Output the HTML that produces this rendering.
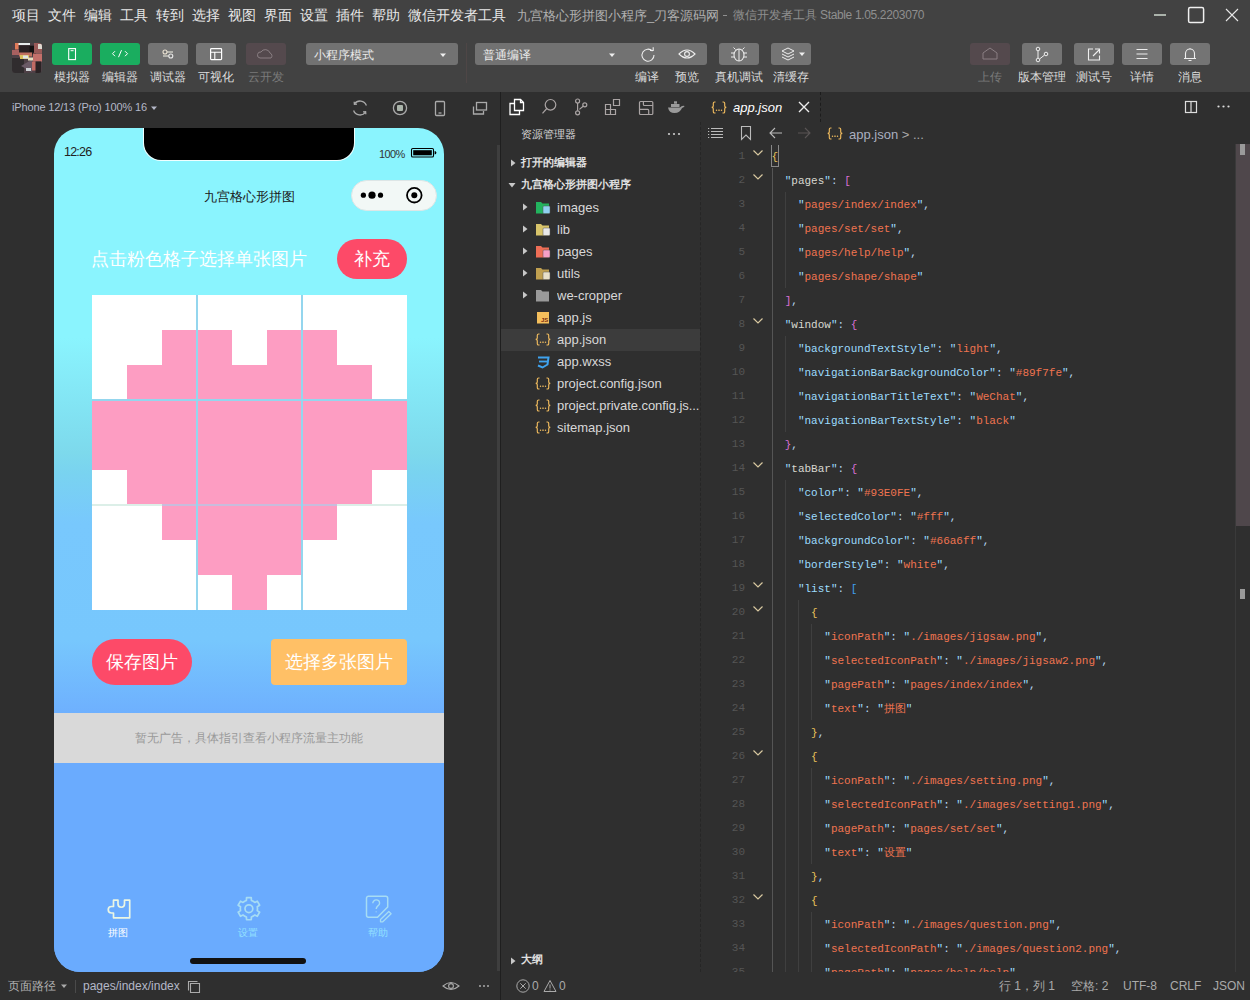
<!DOCTYPE html>
<html><head><meta charset="utf-8">
<style>
*{box-sizing:border-box;margin:0;padding:0}
html,body{width:1250px;height:1000px;overflow:hidden;background:#2f2f2f;font-family:"Liberation Sans",sans-serif;}
.a{position:absolute}
#top{left:0;top:0;width:1250px;height:92px;background:#424242}
.menu{top:6px;font-size:14px;color:#e8e8e8;line-height:18px;white-space:nowrap}
.tb{top:43px;width:40px;height:22px;border-radius:3px;background:#747474}
.tl{top:70px;font-size:12px;color:#dcdcdc;line-height:15px;white-space:nowrap;text-align:center}
#sim{left:0;top:92px;width:500px;height:880px;background:#2f2f2f}
#exp{left:501px;top:92px;width:199px;height:880px;background:#2f2f2f}
#ed{left:700px;top:92px;width:550px;height:880px;background:#2f2f2f}
#status{left:0;top:972px;width:1250px;height:28px;background:#2f2f2f}
.code{font-family:"Liberation Mono",monospace;font-size:11px;white-space:pre;line-height:24px}
</style></head><body><svg width="0" height="0" style="position:absolute"><defs><symbol id="jsn" viewBox="0 0 16 13"><g fill="none" stroke="#f0bb5e" stroke-width="1.15"><path d="M4.5 1H3.6Q2.3 1 2.3 2.3V5Q2.3 6.4 0.7 6.4Q2.3 6.4 2.3 7.8V10.7Q2.3 12 3.6 12H4.5"/><path d="M11.5 1H12.4Q13.7 1 13.7 2.3V5Q13.7 6.4 15.3 6.4Q13.7 6.4 13.7 7.8V10.7Q13.7 12 12.4 12H11.5"/></g><g fill="#f0bb5e"><circle cx="5.5" cy="9.2" r="0.75"/><rect x="7.2" y="8.6" width="1.6" height="1.2"/><circle cx="10.5" cy="9.2" r="0.75"/></g></symbol></defs></svg>
<div id="top" class="a">
<div class="a menu" style="left:12px">项目</div>
<div class="a menu" style="left:48px">文件</div>
<div class="a menu" style="left:84px">编辑</div>
<div class="a menu" style="left:120px">工具</div>
<div class="a menu" style="left:156px">转到</div>
<div class="a menu" style="left:192px">选择</div>
<div class="a menu" style="left:228px">视图</div>
<div class="a menu" style="left:264px">界面</div>
<div class="a menu" style="left:300px">设置</div>
<div class="a menu" style="left:336px">插件</div>
<div class="a menu" style="left:372px">帮助</div>
<div class="a menu" style="left:408px">微信开发者工具</div>
<div class="a" style="left:517px;top:7px;font-size:13px;line-height:17px;color:#b0b0b0;white-space:nowrap">九宫格心形拼图小程序_刀客源码网</div>
<div class="a" style="left:723px;top:15px;width:4px;height:1px;background:#8f8f8f"></div>
<div class="a" style="left:733px;top:7px;font-size:12px;line-height:17px;color:#8f8f8f;white-space:nowrap">微信开发者工具</div>
<div class="a" style="left:820px;top:7px;font-size:12px;line-height:17px;color:#8f8f8f;white-space:nowrap;letter-spacing:-0.35px">Stable 1.05.2203070</div>
<svg class="a" style="left:1150px;top:0" width="100" height="30"><path d="M4 15h12" stroke="#aab2aa" stroke-width="2"/><rect x="38.6" y="7.6" width="15" height="15" rx="1.6" stroke="#f0f0f0" stroke-width="1.5" fill="none"/><path d="M76 9l12 12M88 9l-12 12" stroke="#e8e8e8" stroke-width="1.1"/></svg>
<svg class="a" style="left:12px;top:42.5px" width="30" height="30"><defs><clipPath id="avc"><rect width="30" height="30" rx="3.5"/></clipPath></defs><g clip-path="url(#avc)">
<rect width="30" height="30" fill="#4e4046"/>
<rect x="0" y="15" width="12" height="15" fill="#302c2e"/>
<rect x="6" y="0" width="12" height="2" fill="#e8ecec"/>
<rect x="3" y="0" width="3.5" height="6.5" fill="#e07a58"/>
<rect x="0" y="7" width="8" height="5" fill="#a86060"/>
<rect x="7" y="2.5" width="17" height="9" fill="#2a2224"/>
<rect x="17.5" y="3" width="6.5" height="6" fill="#151212"/>
<rect x="22" y="0" width="8" height="10" fill="#9a5a58"/>
<rect x="26" y="1" width="4" height="5" fill="#e0d8d0"/>
<rect x="21" y="10.5" width="9" height="8" fill="#c4706a"/>
<rect x="20" y="18.5" width="4" height="9" fill="#c06a64"/>
<rect x="23.5" y="18.5" width="5.5" height="11.5" fill="#2a2224"/>
<path d="M20 16.5L9 23L20 29Z" fill="#6a5a66"/>
<rect x="7" y="9.5" width="13" height="4" fill="#c07060"/>
<rect x="8" y="12" width="9" height="4" fill="#d8c060"/>
<rect x="11" y="12.5" width="5" height="3" fill="#dfe4e8"/>
<rect x="16" y="14.5" width="5" height="3" fill="#e8e0c0"/>
<rect x="14" y="25" width="5" height="3" fill="#d0d4d8"/>
</g></svg>
<div class="a tb" style="left:52px;background:#1aad5f"></div>
<svg class="a" style="left:52px;top:43px" width="40" height="22"><rect x="16.7" y="5.6" width="6.8" height="11" stroke="#fff" fill="none" stroke-width="1.1"/><path d="M18.6 7.7h3" stroke="#fff" stroke-width="1"/></svg>
<div class="a tb" style="left:100px;background:#1aad5f"></div>
<svg class="a" style="left:100px;top:43px" width="40" height="22"><path d="M15 8.2l-2.5 2.5 2.5 2.5M25 8.2l2.5 2.5-2.5 2.5M21.5 7.2l-3 7" stroke="#fff" fill="none" stroke-width="1"/></svg>
<div class="a tb" style="left:148px"></div>
<svg class="a" style="left:148px;top:43px" width="40" height="22"><path d="M19 9h6M15 13h6" stroke="#c8c8c0" stroke-width="1.6"/><circle cx="17" cy="9" r="2" fill="#747474" stroke="#e8e0d0" stroke-width="1.1"/><circle cx="22.8" cy="13" r="2" fill="#747474" stroke="#e8e8e8" stroke-width="1.1"/></svg>
<div class="a tb" style="left:196px"></div>
<svg class="a" style="left:196px;top:43px" width="40" height="22"><rect x="14.6" y="5.6" width="11" height="11" rx="0.8" stroke="#fff" fill="none" stroke-width="1.2"/><path d="M14.6 9.2h11M18.8 9.2v7.4" stroke="#fff" stroke-width="1.1"/></svg>
<div class="a tb" style="left:246px;background:#54494d"></div>
<svg class="a" style="left:246px;top:43px" width="40" height="22"><path d="M14 15a3 3 0 0 1 1-6a5 5 0 0 1 9 1a3 3 0 0 1 1 5z" stroke="#8a7f83" fill="none" stroke-width="1"/></svg>
<div class="a" style="left:306px;top:43px;width:152px;height:22px;border-radius:3px;background:#727272"></div>
<div class="a" style="left:314px;top:47px;font-size:12px;line-height:17px;color:#eaeaea">小程序模式</div>
<svg class="a" style="left:437.5px;top:50.5px" width="10" height="8"><path d="M2 2.5h6l-3 3.5z" fill="#eee"/></svg>
<div class="a" style="left:466px;top:43px;width:1px;height:40px;background:#4e4646"></div>
<div class="a" style="left:475px;top:43px;width:232px;height:22px;border-radius:3px;background:#727272"></div>
<div class="a" style="left:483px;top:47px;font-size:12px;line-height:17px;color:#eaeaea">普通编译</div>
<svg class="a" style="left:606.5px;top:50.5px" width="10" height="8"><path d="M2 2.5h6l-3 3.5z" fill="#eee"/></svg>
<svg class="a" style="left:627px;top:43px" width="80" height="22"><path d="M25.5 8.2A6 6 0 1 0 27 12" stroke="#eee" fill="none" stroke-width="1.1"/><path d="M23 7.5h3.2v-3.2" stroke="#eee" fill="none" stroke-width="1.1"/><path d="M52 11q8-8 16 0q-8 8-16 0z" stroke="#eee" fill="none" stroke-width="1.1"/><circle cx="60" cy="11" r="2.4" stroke="#eee" fill="none" stroke-width="1.1"/></svg>
<div class="a tb" style="left:719px"></div>
<svg class="a" style="left:719px;top:43px" width="40" height="22"><ellipse cx="20" cy="12" rx="5" ry="6" stroke="#eee" fill="none" stroke-width="1.1"/><path d="M20 6v12M15 10h-3M15 14h-3M25 10h3M25 14h3M16.5 6.5l-2-2M23.5 6.5l2-2" stroke="#eee" stroke-width="1"/></svg>
<div class="a tb" style="left:771px"></div>
<svg class="a" style="left:771px;top:43px" width="40" height="22"><path d="M11 8l6-3 6 3-6 3z" stroke="#eee" fill="none" stroke-width="1"/><path d="M11 11l6 3 6-3M11 14l6 3 6-3" stroke="#eee" fill="none" stroke-width="1"/><path d="M28 9.5h6l-3 3.5z" fill="#eee"/></svg>
<div class="a tb" style="left:970px;background:#54494d"></div>
<svg class="a" style="left:970px;top:43px" width="40" height="22"><path d="M13 16h14v-6l-7-5-7 5z" stroke="#8a7f83" fill="none" stroke-width="1"/></svg>
<div class="a tb" style="left:1022px"></div>
<svg class="a" style="left:1022px;top:43px" width="40" height="22"><circle cx="16" cy="6" r="1.8" stroke="#eee" fill="none"/><circle cx="16" cy="17" r="1.8" stroke="#eee" fill="none"/><circle cx="24" cy="11" r="1.8" stroke="#eee" fill="none"/><path d="M16 8v7M22.4 12.2l-4.6 3.6" stroke="#eee" stroke-width="1"/></svg>
<div class="a tb" style="left:1074px"></div>
<svg class="a" style="left:1074px;top:43px" width="40" height="22"><path d="M19 6h-4.5v11h11v-4.5" stroke="#eee" fill="none" stroke-width="1.1"/><path d="M19 13l6-6M21 6h4.5v4.5" stroke="#eee" fill="none" stroke-width="1.1"/></svg>
<div class="a tb" style="left:1122px"></div>
<svg class="a" style="left:1122px;top:43px" width="40" height="22"><path d="M14.5 6.5h11M14.5 11h11M14.5 15.5h11" stroke="#eee" stroke-width="1.1"/></svg>
<div class="a tb" style="left:1170px"></div>
<svg class="a" style="left:1170px;top:43px" width="40" height="22"><path d="M15.5 15.5v-5a4.5 4.5 0 0 1 9 0v5zM14 15.5h12M20 5v1.5M18.5 17.5h3" stroke="#eee" fill="none" stroke-width="1.1"/></svg>
<div class="a tl" style="left:42px;width:60px">模拟器</div>
<div class="a tl" style="left:90px;width:60px">编辑器</div>
<div class="a tl" style="left:138px;width:60px">调试器</div>
<div class="a tl" style="left:186px;width:60px">可视化</div>
<div class="a tl" style="left:236px;width:60px;color:#7a7a7a">云开发</div>
<div class="a tl" style="left:617px;width:60px">编译</div>
<div class="a tl" style="left:657px;width:60px">预览</div>
<div class="a tl" style="left:709px;width:60px">真机调试</div>
<div class="a tl" style="left:761px;width:60px">清缓存</div>
<div class="a tl" style="left:960px;width:60px;color:#7a7a7a">上传</div>
<div class="a tl" style="left:1012px;width:60px">版本管理</div>
<div class="a tl" style="left:1064px;width:60px">测试号</div>
<div class="a tl" style="left:1112px;width:60px">详情</div>
<div class="a tl" style="left:1160px;width:60px">消息</div>
</div>
<div id="sim" class="a">
<div class="a" style="left:12px;top:8px;font-size:11px;line-height:15px;color:#b4b8c8;white-space:nowrap;letter-spacing:-0.15px">iPhone 12/13 (Pro) 100% 16 <svg width="8" height="6"><path d="M1 1.5h6l-3 3.5z" fill="#b4b8c8"/></svg></div>
<svg class="a" style="left:345px;top:0" width="155" height="30"><g stroke="#aaa" fill="none" stroke-width="1.3"><path d="M21.4 13.5A6.7 6.7 0 0 0 9.5 12"/><path d="M8.6 18.5A6.7 6.7 0 0 0 20.5 20"/><path d="M9.2 9.8l0.2 2.6 2.6-0.2M20.8 22.2l-0.2-2.6-2.6 0.2"/>
<circle cx="55" cy="16" r="6.6"/><rect x="90.5" y="9.5" width="9" height="14" rx="1"/><path d="M93.5 21h3"/><rect x="131.5" y="10.5" width="10" height="7.5"/><path d="M128.5 14.5v7.5h10v-3"/></g><rect x="52" y="13" width="6" height="6" rx="1" fill="#aab4aa"/></svg>
<div class="a" style="left:54px;top:36px;width:390px;height:844px;border-radius:26px;overflow:hidden;background:linear-gradient(#8af4fe 0px,#8af4fe 210px,#7dd9ec 325px,#79d3f0 345px,#78c8fd 395px,#77c7fd 512px,#6eb0fe 585px)">
  <div class="a" style="left:90px;top:0;width:210px;height:32px;background:#000;border-radius:0 0 17px 17px;box-shadow:0 0 0 1px #f0ffff"></div>
  <div class="a" style="left:10px;top:17px;font-size:12.5px;line-height:15px;color:#222;letter-spacing:-0.8px">12:26</div>
  <div class="a" style="left:325px;top:20px;font-size:11px;line-height:13px;color:#333;letter-spacing:-0.6px">100%</div>
  <svg class="a" style="left:356px;top:19px" width="30" height="12"><rect x="1.5" y="1.5" width="22" height="8.5" rx="1.3" fill="none" stroke="#000" stroke-width="1.1"/><rect x="3.2" y="3.2" width="18.6" height="5.1" fill="#000"/><path d="M24.6 4a1.8 1.8 0 0 1 0 3.6z" fill="#000"/></svg>
  <div class="a" style="left:0;top:60px;width:390px;text-align:center;font-size:13px;line-height:17px;color:#1a1a1a">九宫格心形拼图</div>
  <div class="a" style="left:297px;top:51.5px;width:86px;height:31px;border-radius:16px;background:#f2f8f6;border:1px solid #dde6e6"></div>
  <svg class="a" style="left:297px;top:51px" width="86" height="32"><circle cx="12.4" cy="16.2" r="2.6" fill="#000"/><circle cx="21" cy="16.2" r="3.6" fill="#000"/><circle cx="29.5" cy="16.2" r="2.6" fill="#000"/><circle cx="63.3" cy="16.2" r="7.3" fill="none" stroke="#000" stroke-width="1.8"/><circle cx="63.3" cy="16.2" r="3" fill="#000"/></svg>
  <div class="a" style="left:37px;top:119px;font-size:18px;line-height:24px;color:#fff;white-space:nowrap">点击粉色格子选择单张图片</div>
  <div class="a" style="left:283px;top:111px;width:70px;height:40px;border-radius:20px;background:#fd4a68;color:#fff;font-size:18px;line-height:40px;text-align:center">补充</div>
  <div class="a" style="left:38px;top:167px;width:315px;height:315px;background:#fff">
  <div class="a" style="left:70px;top:35px;width:70px;height:35px;background:#fd9dc2"></div>
<div class="a" style="left:175px;top:35px;width:70px;height:35px;background:#fd9dc2"></div>
<div class="a" style="left:35px;top:70px;width:245px;height:35px;background:#fd9dc2"></div>
<div class="a" style="left:0px;top:105px;width:315px;height:35px;background:#fd9dc2"></div>
<div class="a" style="left:0px;top:140px;width:315px;height:35px;background:#fd9dc2"></div>
<div class="a" style="left:35px;top:175px;width:245px;height:35px;background:#fd9dc2"></div>
<div class="a" style="left:70px;top:210px;width:175px;height:35px;background:#fd9dc2"></div>
<div class="a" style="left:105px;top:245px;width:105px;height:35px;background:#fd9dc2"></div>
<div class="a" style="left:140px;top:280px;width:35px;height:35px;background:#fd9dc2"></div>
  <div class="a" style="left:0;top:209px;width:315px;height:2px;background:linear-gradient(90deg,#dcefe8 70px,#c8bcdc 70px,#c8bcdc 245px,#dcefe8 245px)"></div>
  <div class="a" style="left:104px;top:0;width:2px;height:315px;background:#94d6ee"></div>
  <div class="a" style="left:209px;top:0;width:2px;height:315px;background:#94d6ee"></div>
  <div class="a" style="left:0;top:104px;width:315px;height:2px;background:#94d6ee"></div>
  
  </div>
  <div class="a" style="left:38px;top:511px;width:100px;height:46px;border-radius:23px;background:#fd4a68;color:#fff;font-size:18px;line-height:46px;text-align:center">保存图片</div>
  <div class="a" style="left:217px;top:511px;width:136px;height:46px;border-radius:4px;background:#ffc066;color:#fff;font-size:18px;line-height:46px;text-align:center">选择多张图片</div>
  <div class="a" style="left:0;top:585px;width:390px;height:50px;background:#d9d9d9;color:#9a9a9a;font-size:12px;line-height:50px;text-align:center">暂无广告，具体指引查看小程序流量主功能</div>
  <div class="a" style="left:0;top:635px;width:390px;height:209px;background:#6aabfe"></div>
  <svg class="a" style="left:0;top:765px" width="390" height="40"><g fill="none" stroke-width="1.7" stroke-linejoin="round">
<path stroke="#eaf6e4" d="M59.5 7.2H64V11a3.25 3.25 0 0 0 6.5 0V7.2H75.7V24.8H59.5V20H57.5a3.25 3.25 0 0 1 0-6.5H59.5Z"/>
<g stroke="#a6dcf4"><path d="M190.60 8.25L192.39 7.48L192.55 4.65L197.25 4.65L197.41 7.48L199.20 8.25L200.77 9.41L203.30 8.14L205.65 12.21L203.28 13.77L203.50 15.70L203.28 17.63L205.65 19.19L203.30 23.26L200.77 21.99L199.20 23.15L197.41 23.92L197.25 26.75L192.55 26.75L192.39 23.92L190.60 23.15L189.03 21.99L186.50 23.26L184.15 19.19L186.52 17.63L186.30 15.70L186.52 13.77L184.15 12.21L186.50 8.14L189.03 9.41Z"/><circle cx="194.9" cy="15.700000000000045" r="3.9"/>
<path d="M333.7 14V5.3a2 2 0 0 0-2-2H314.5a2 2 0 0 0-2 2V22.2a2 2 0 0 0 2 2H323.5Z" stroke-width="1.5"/><path d="M318.8 10.3a3.4 3.4 0 0 1 6.8 0c0 2.2-3.4 3-3.4 5.6" stroke-width="1.4"/><path d="M322.2 18.4v0.9" stroke-width="1.4"/><path d="M326.5 26.5l8.3-8 2.3 2.3-8.3 8h-2.3z" stroke-width="1.3"/></g></g></svg>
<div class="a" style="left:54px;top:798.5px;width:20px;font-size:10px;line-height:12px;color:#fff;text-align:center;white-space:nowrap">拼图</div>
<div class="a" style="left:184px;top:798.5px;width:20px;font-size:10px;line-height:12px;color:#93e0fe;text-align:center;white-space:nowrap">设置</div>
<div class="a" style="left:314px;top:798.5px;width:20px;font-size:10px;line-height:12px;color:#93e0fe;text-align:center;white-space:nowrap">帮助</div>

  <div class="a" style="left:136px;top:830px;width:116px;height:6px;border-radius:3px;background:#111"></div>
</div>
</div>
<div id="exp" class="a">
<svg class="a" style="left:0;top:0" width="199" height="30"><g fill="none" stroke-width="1.3">
<g stroke="#fff"><path d="M13.5 18.5V7.5H19.5L22.5 10.5V18.5Z"/><path d="M19.5 7.5V10.5H22.5"/><path d="M13.5 11.5H9V22.5H18.5V18.5"/></g>
<g stroke="#aaa4a4" stroke-width="1.2"><circle cx="49.5" cy="12.8" r="5.3"/><path d="M45.8 16.5l-4.3 4.8"/>
<circle cx="76.6" cy="9" r="2"/><circle cx="76.6" cy="20.8" r="2"/><circle cx="83.8" cy="12.8" r="2"/><path d="M76.6 11v7.8M82.2 14.2l-3.8 3.2"/>
<path d="M104.5 12.5h5v5h-5zM104.5 17.5h5v5h-5zM109.5 17.5h5v5h-5zM112.5 7.5h6v6h-6z"/>
<rect x="138.5" y="9.5" width="13.3" height="13" rx="1"/><path d="M142.4 9.5V12.5a1 1 0 0 0 1 1H151.8M138.5 17.4H146.7a1 1 0 0 1 1 1V22.5"/></g></g>
<path d="M168 15.5H179q2-2.5 4.7-1.5q-1 1.5-2.7 2q-2 5-7.5 5q-5.5 0-6.5-5.5z" fill="#9a9a9a"/><rect x="170" y="12" width="8.5" height="3" fill="#9a9a9a"/><rect x="173" y="9.3" width="3" height="2.4" fill="#9a9a9a"/></svg>
<div class="a" style="left:20px;top:35px;font-size:11px;line-height:15px;color:#d4d4d4">资源管理器</div>
<svg class="a" style="left:165px;top:39px" width="16" height="6"><circle cx="3" cy="3" r="1.1" fill="#ccc"/><circle cx="8" cy="3" r="1.1" fill="#ccc"/><circle cx="13" cy="3" r="1.1" fill="#ccc"/></svg>
<svg class="a" style="left:8px;top:66px" width="8" height="10"><path d="M2 1.5l4.5 3.5-4.5 3.5z" fill="#c8c8c8"/></svg>
<div class="a" style="left:20px;top:63px;font-size:11px;line-height:15px;color:#e0e0e0;font-weight:bold">打开的编辑器</div>
<svg class="a" style="left:6px;top:89px" width="10" height="8"><path d="M1.5 2h7l-3.5 4.5z" fill="#c8c8c8"/></svg>
<div class="a" style="left:20px;top:85px;font-size:11px;line-height:15px;color:#e0e0e0;font-weight:bold">九宫格心形拼图小程序</div>
<svg class="a" style="left:20px;top:109.5px" width="8" height="10"><path d="M2 1.5l4.5 3.5-4.5 3.5z" fill="#c8c8c8"/></svg><svg class="a" style="left:34px;top:108.5px" width="16" height="13"><path d="M1 1h5l1.5 1.5H14v10H1z" fill="#22b35e"/><rect x="8" y="5" width="7" height="7.5" rx="1" fill="#8fd0f0" stroke="#555" stroke-width="0.5"/></svg><div class="a" style="left:56px;top:106.5px;width:142px;font-size:13px;line-height:17px;color:#d8d8d8;white-space:nowrap;overflow:hidden;text-overflow:ellipsis">images</div><svg class="a" style="left:20px;top:131.5px" width="8" height="10"><path d="M2 1.5l4.5 3.5-4.5 3.5z" fill="#c8c8c8"/></svg><svg class="a" style="left:34px;top:130.5px" width="16" height="13"><path d="M1 1h5l1.5 1.5H14v10H1z" fill="#d8c46a"/><rect x="8" y="5" width="7" height="7.5" rx="1" fill="#e8e8e8" stroke="#555" stroke-width="0.5"/></svg><div class="a" style="left:56px;top:128.5px;width:142px;font-size:13px;line-height:17px;color:#d8d8d8;white-space:nowrap;overflow:hidden;text-overflow:ellipsis">lib</div><svg class="a" style="left:20px;top:153.5px" width="8" height="10"><path d="M2 1.5l4.5 3.5-4.5 3.5z" fill="#c8c8c8"/></svg><svg class="a" style="left:34px;top:152.5px" width="16" height="13"><path d="M1 1h5l1.5 1.5H14v10H1z" fill="#ee6e56"/><rect x="8" y="5" width="7" height="7.5" rx="1" fill="#f8a0c8" stroke="#555" stroke-width="0.5"/></svg><div class="a" style="left:56px;top:150.5px;width:142px;font-size:13px;line-height:17px;color:#d8d8d8;white-space:nowrap;overflow:hidden;text-overflow:ellipsis">pages</div><svg class="a" style="left:20px;top:175.5px" width="8" height="10"><path d="M2 1.5l4.5 3.5-4.5 3.5z" fill="#c8c8c8"/></svg><svg class="a" style="left:34px;top:174.5px" width="16" height="13"><path d="M1 1h5l1.5 1.5H14v10H1z" fill="#c0a050"/><rect x="8" y="5" width="7" height="7.5" rx="1" fill="#e8e0c8" stroke="#555" stroke-width="0.5"/></svg><div class="a" style="left:56px;top:172.5px;width:142px;font-size:13px;line-height:17px;color:#d8d8d8;white-space:nowrap;overflow:hidden;text-overflow:ellipsis">utils</div><svg class="a" style="left:20px;top:197.5px" width="8" height="10"><path d="M2 1.5l4.5 3.5-4.5 3.5z" fill="#c8c8c8"/></svg><svg class="a" style="left:34px;top:196.5px" width="16" height="13"><path d="M1 1h5l1.5 1.5H14v10H1z" fill="#9a9a9a"/></svg><div class="a" style="left:56px;top:194.5px;width:142px;font-size:13px;line-height:17px;color:#d8d8d8;white-space:nowrap;overflow:hidden;text-overflow:ellipsis">we-cropper</div><svg class="a" style="left:36px;top:219.5px" width="13" height="12"><rect x="0" y="0" width="12" height="11.5" fill="#f5bf5c"/><text x="4" y="10" font-size="6" font-family="Liberation Sans" font-weight="bold" fill="#7a2a10">JS</text></svg><div class="a" style="left:56px;top:216.5px;width:142px;font-size:13px;line-height:17px;color:#d8d8d8;white-space:nowrap;overflow:hidden;text-overflow:ellipsis">app.js</div><div class="a" style="left:0;top:236.5px;width:199px;height:22px;background:#3c3c3c"></div><svg class="a" style="left:34.0px;top:241.0px" width="16" height="13"><use href="#jsn"/></svg><div class="a" style="left:56px;top:238.5px;width:142px;font-size:13px;line-height:17px;color:#d8d8d8;white-space:nowrap;overflow:hidden;text-overflow:ellipsis">app.json</div><svg class="a" style="left:35px;top:263.5px" width="15" height="13"><path d="M2 1.5h10.5l-1 7-5 3-4.5-2" fill="none" stroke="#3fa3ef" stroke-width="2"/><path d="M3 5.5h8" stroke="#3fa3ef" stroke-width="1.8"/></svg><div class="a" style="left:56px;top:260.5px;width:142px;font-size:13px;line-height:17px;color:#d8d8d8;white-space:nowrap;overflow:hidden;text-overflow:ellipsis">app.wxss</div><svg class="a" style="left:34.0px;top:285.0px" width="16" height="13"><use href="#jsn"/></svg><div class="a" style="left:56px;top:282.5px;width:142px;font-size:13px;line-height:17px;color:#d8d8d8;white-space:nowrap;overflow:hidden;text-overflow:ellipsis">project.config.json</div><svg class="a" style="left:34.0px;top:307.0px" width="16" height="13"><use href="#jsn"/></svg><div class="a" style="left:56px;top:304.5px;width:142px;font-size:13px;line-height:17px;color:#d8d8d8;white-space:nowrap;letter-spacing:-0.05px">project.private.config.js...</div><svg class="a" style="left:34.0px;top:329.0px" width="16" height="13"><use href="#jsn"/></svg><div class="a" style="left:56px;top:326.5px;width:142px;font-size:13px;line-height:17px;color:#d8d8d8;white-space:nowrap;overflow:hidden;text-overflow:ellipsis">sitemap.json</div>
<svg class="a" style="left:8px;top:864px" width="8" height="10"><path d="M2 1.5l4.5 3.5-4.5 3.5z" fill="#c8c8c8"/></svg>
<div class="a" style="left:20px;top:860px;font-size:11px;line-height:15px;color:#e0e0e0;font-weight:bold">大纲</div>
</div>
<div id="ed" class="a">
<div class="a" style="left:120px;top:0;width:1px;height:30px;border-left:1px dashed #1c1c1c"></div>
<div class="a" style="left:0;top:30px;width:1px;height:850px;border-left:1px dashed #262626"></div>
<svg class="a" style="left:10.5px;top:9px" width="16" height="13"><use href="#jsn"/></svg>
<div class="a" style="left:33px;top:7px;font-size:13px;line-height:17px;color:#fff;font-style:italic;white-space:nowrap">app.json</div>
<svg class="a" style="left:98px;top:9px" width="12" height="12"><path d="M1 1l10 10M11 1l-10 10" stroke="#eee" stroke-width="1.4"/></svg>
<svg class="a" style="left:480px;top:5px" width="60" height="22"><rect x="5.5" y="4.5" width="11" height="11" fill="none" stroke="#ddd" stroke-width="1.2"/><path d="M11 4.5v11" stroke="#ddd" stroke-width="1.2"/><circle cx="38.5" cy="9.5" r="1.1" fill="#ddd"/><circle cx="43.5" cy="9.5" r="1.1" fill="#ddd"/><circle cx="48.5" cy="9.5" r="1.1" fill="#ddd"/></svg>
<svg class="a" style="left:0;top:30px" width="120" height="23"><g fill="none" stroke-width="1.1">
<path d="M11 6.5h12M11 9.5h12M11 12.5h12M11 15.5h12" stroke="#bbb"/><path d="M8 6.5h1.2M8 9.5h1.2M8 12.5h1.2M8 15.5h1.2" stroke="#bbb"/>
<path d="M41.5 4.5h9v13l-4.5-4.5-4.5 4.5z" stroke="#bbb"/>
<path d="M70 11h12M75 6l-5 5 5 5" stroke="#bbb"/><path d="M98 11h12M105 6l5 5-5 5" stroke="#5a5555"/></g></svg>
<svg class="a" style="left:126.5px;top:35px" width="16" height="13"><use href="#jsn"/></svg>
<div class="a" style="left:149px;top:34px;font-size:13px;line-height:17px;color:#aab0c0;white-space:nowrap">app.json <span style="color:#aaa">&gt;</span> <span style="color:#aaa">...</span></div>
<div class="a" style="left:0;top:53px;width:535px;height:827px;overflow:hidden">
<div class="a" style="left:71.5px;top:23px;width:1px;height:816px;background:#555"></div>
<div class="a" style="left:84.7px;top:47px;width:1px;height:96px;background:#3f3f3f"></div>
<div class="a" style="left:84.7px;top:191px;width:1px;height:96px;background:#3f3f3f"></div>
<div class="a" style="left:84.7px;top:335px;width:1px;height:504px;background:#3f3f3f"></div>
<div class="a" style="left:97.9px;top:455px;width:1px;height:384px;background:#3f3f3f"></div>
<div class="a" style="left:111.1px;top:479px;width:1px;height:96px;background:#3f3f3f"></div>
<div class="a" style="left:111.1px;top:623px;width:1px;height:96px;background:#3f3f3f"></div>
<div class="a" style="left:111.1px;top:767px;width:1px;height:72px;background:#3f3f3f"></div>
<div class="a" style="left:0;top:-1px;width:45px;text-align:right;font-family:'Liberation Mono',monospace;font-size:11px;line-height:24px;color:#555">1</div>
<svg class="a" style="left:52px;top:4px" width="12" height="8"><path d="M1.5 1.5l4.5 4.5 4.5-4.5" fill="none" stroke="#d8c8a0" stroke-width="1.2"/></svg>
<div class="a code" style="left:71.5px;top:-0.19999999999999996px"><span style="color:#e9c25a">{</span></div>
<div class="a" style="left:0;top:23px;width:45px;text-align:right;font-family:'Liberation Mono',monospace;font-size:11px;line-height:24px;color:#555">2</div>
<svg class="a" style="left:52px;top:28px" width="12" height="8"><path d="M1.5 1.5l4.5 4.5 4.5-4.5" fill="none" stroke="#d8c8a0" stroke-width="1.2"/></svg>
<div class="a code" style="left:71.5px;top:23.8px">  <span style="color:#9cdcfe">&quot;</span><span style="color:#d8d8d0">pages</span><span style="color:#9cdcfe">&quot;</span><span style="color:#b8d8f0">: </span><span style="color:#da70d6">[</span></div>
<div class="a" style="left:0;top:47px;width:45px;text-align:right;font-family:'Liberation Mono',monospace;font-size:11px;line-height:24px;color:#555">3</div>
<div class="a code" style="left:71.5px;top:47.8px">    <span style="color:#9cdcfe">&quot;</span><span style="color:#f07450">pages/index/index</span><span style="color:#9cdcfe">&quot;</span><span style="color:#b8d8f0">,</span></div>
<div class="a" style="left:0;top:71px;width:45px;text-align:right;font-family:'Liberation Mono',monospace;font-size:11px;line-height:24px;color:#555">4</div>
<div class="a code" style="left:71.5px;top:71.8px">    <span style="color:#9cdcfe">&quot;</span><span style="color:#f07450">pages/set/set</span><span style="color:#9cdcfe">&quot;</span><span style="color:#b8d8f0">,</span></div>
<div class="a" style="left:0;top:95px;width:45px;text-align:right;font-family:'Liberation Mono',monospace;font-size:11px;line-height:24px;color:#555">5</div>
<div class="a code" style="left:71.5px;top:95.8px">    <span style="color:#9cdcfe">&quot;</span><span style="color:#f07450">pages/help/help</span><span style="color:#9cdcfe">&quot;</span><span style="color:#b8d8f0">,</span></div>
<div class="a" style="left:0;top:119px;width:45px;text-align:right;font-family:'Liberation Mono',monospace;font-size:11px;line-height:24px;color:#555">6</div>
<div class="a code" style="left:71.5px;top:119.8px">    <span style="color:#9cdcfe">&quot;</span><span style="color:#f07450">pages/shape/shape</span><span style="color:#9cdcfe">&quot;</span></div>
<div class="a" style="left:0;top:143px;width:45px;text-align:right;font-family:'Liberation Mono',monospace;font-size:11px;line-height:24px;color:#555">7</div>
<div class="a code" style="left:71.5px;top:143.8px">  <span style="color:#da70d6">]</span><span style="color:#b8d8f0">,</span></div>
<div class="a" style="left:0;top:167px;width:45px;text-align:right;font-family:'Liberation Mono',monospace;font-size:11px;line-height:24px;color:#555">8</div>
<svg class="a" style="left:52px;top:172px" width="12" height="8"><path d="M1.5 1.5l4.5 4.5 4.5-4.5" fill="none" stroke="#d8c8a0" stroke-width="1.2"/></svg>
<div class="a code" style="left:71.5px;top:167.8px">  <span style="color:#9cdcfe">&quot;</span><span style="color:#d8d8d0">window</span><span style="color:#9cdcfe">&quot;</span><span style="color:#b8d8f0">: </span><span style="color:#da70d6">{</span></div>
<div class="a" style="left:0;top:191px;width:45px;text-align:right;font-family:'Liberation Mono',monospace;font-size:11px;line-height:24px;color:#555">9</div>
<div class="a code" style="left:71.5px;top:191.8px">    <span style="color:#9cdcfe">&quot;</span><span style="color:#9cdcfe">backgroundTextStyle</span><span style="color:#9cdcfe">&quot;</span><span style="color:#b8d8f0">: </span><span style="color:#9cdcfe">&quot;</span><span style="color:#f07450">light</span><span style="color:#9cdcfe">&quot;</span><span style="color:#b8d8f0">,</span></div>
<div class="a" style="left:0;top:215px;width:45px;text-align:right;font-family:'Liberation Mono',monospace;font-size:11px;line-height:24px;color:#555">10</div>
<div class="a code" style="left:71.5px;top:215.8px">    <span style="color:#9cdcfe">&quot;</span><span style="color:#9cdcfe">navigationBarBackgroundColor</span><span style="color:#9cdcfe">&quot;</span><span style="color:#b8d8f0">: </span><span style="color:#9cdcfe">&quot;</span><span style="color:#f07450">#89f7fe</span><span style="color:#9cdcfe">&quot;</span><span style="color:#b8d8f0">,</span></div>
<div class="a" style="left:0;top:239px;width:45px;text-align:right;font-family:'Liberation Mono',monospace;font-size:11px;line-height:24px;color:#555">11</div>
<div class="a code" style="left:71.5px;top:239.8px">    <span style="color:#9cdcfe">&quot;</span><span style="color:#9cdcfe">navigationBarTitleText</span><span style="color:#9cdcfe">&quot;</span><span style="color:#b8d8f0">: </span><span style="color:#9cdcfe">&quot;</span><span style="color:#f07450">WeChat</span><span style="color:#9cdcfe">&quot;</span><span style="color:#b8d8f0">,</span></div>
<div class="a" style="left:0;top:263px;width:45px;text-align:right;font-family:'Liberation Mono',monospace;font-size:11px;line-height:24px;color:#555">12</div>
<div class="a code" style="left:71.5px;top:263.8px">    <span style="color:#9cdcfe">&quot;</span><span style="color:#9cdcfe">navigationBarTextStyle</span><span style="color:#9cdcfe">&quot;</span><span style="color:#b8d8f0">: </span><span style="color:#9cdcfe">&quot;</span><span style="color:#f07450">black</span><span style="color:#9cdcfe">&quot;</span></div>
<div class="a" style="left:0;top:287px;width:45px;text-align:right;font-family:'Liberation Mono',monospace;font-size:11px;line-height:24px;color:#555">13</div>
<div class="a code" style="left:71.5px;top:287.8px">  <span style="color:#da70d6">}</span><span style="color:#b8d8f0">,</span></div>
<div class="a" style="left:0;top:311px;width:45px;text-align:right;font-family:'Liberation Mono',monospace;font-size:11px;line-height:24px;color:#555">14</div>
<svg class="a" style="left:52px;top:316px" width="12" height="8"><path d="M1.5 1.5l4.5 4.5 4.5-4.5" fill="none" stroke="#d8c8a0" stroke-width="1.2"/></svg>
<div class="a code" style="left:71.5px;top:311.8px">  <span style="color:#9cdcfe">&quot;</span><span style="color:#d8d8d0">tabBar</span><span style="color:#9cdcfe">&quot;</span><span style="color:#b8d8f0">: </span><span style="color:#da70d6">{</span></div>
<div class="a" style="left:0;top:335px;width:45px;text-align:right;font-family:'Liberation Mono',monospace;font-size:11px;line-height:24px;color:#555">15</div>
<div class="a code" style="left:71.5px;top:335.8px">    <span style="color:#9cdcfe">&quot;</span><span style="color:#9cdcfe">color</span><span style="color:#9cdcfe">&quot;</span><span style="color:#b8d8f0">: </span><span style="color:#9cdcfe">&quot;</span><span style="color:#f07450">#93E0FE</span><span style="color:#9cdcfe">&quot;</span><span style="color:#b8d8f0">,</span></div>
<div class="a" style="left:0;top:359px;width:45px;text-align:right;font-family:'Liberation Mono',monospace;font-size:11px;line-height:24px;color:#555">16</div>
<div class="a code" style="left:71.5px;top:359.8px">    <span style="color:#9cdcfe">&quot;</span><span style="color:#9cdcfe">selectedColor</span><span style="color:#9cdcfe">&quot;</span><span style="color:#b8d8f0">: </span><span style="color:#9cdcfe">&quot;</span><span style="color:#f07450">#fff</span><span style="color:#9cdcfe">&quot;</span><span style="color:#b8d8f0">,</span></div>
<div class="a" style="left:0;top:383px;width:45px;text-align:right;font-family:'Liberation Mono',monospace;font-size:11px;line-height:24px;color:#555">17</div>
<div class="a code" style="left:71.5px;top:383.8px">    <span style="color:#9cdcfe">&quot;</span><span style="color:#9cdcfe">backgroundColor</span><span style="color:#9cdcfe">&quot;</span><span style="color:#b8d8f0">: </span><span style="color:#9cdcfe">&quot;</span><span style="color:#f07450">#66a6ff</span><span style="color:#9cdcfe">&quot;</span><span style="color:#b8d8f0">,</span></div>
<div class="a" style="left:0;top:407px;width:45px;text-align:right;font-family:'Liberation Mono',monospace;font-size:11px;line-height:24px;color:#555">18</div>
<div class="a code" style="left:71.5px;top:407.8px">    <span style="color:#9cdcfe">&quot;</span><span style="color:#9cdcfe">borderStyle</span><span style="color:#9cdcfe">&quot;</span><span style="color:#b8d8f0">: </span><span style="color:#9cdcfe">&quot;</span><span style="color:#f07450">white</span><span style="color:#9cdcfe">&quot;</span><span style="color:#b8d8f0">,</span></div>
<div class="a" style="left:0;top:431px;width:45px;text-align:right;font-family:'Liberation Mono',monospace;font-size:11px;line-height:24px;color:#555">19</div>
<svg class="a" style="left:52px;top:436px" width="12" height="8"><path d="M1.5 1.5l4.5 4.5 4.5-4.5" fill="none" stroke="#d8c8a0" stroke-width="1.2"/></svg>
<div class="a code" style="left:71.5px;top:431.8px">    <span style="color:#9cdcfe">&quot;</span><span style="color:#9cdcfe">list</span><span style="color:#9cdcfe">&quot;</span><span style="color:#b8d8f0">: </span><span style="color:#3fa0f0">[</span></div>
<div class="a" style="left:0;top:455px;width:45px;text-align:right;font-family:'Liberation Mono',monospace;font-size:11px;line-height:24px;color:#555">20</div>
<svg class="a" style="left:52px;top:460px" width="12" height="8"><path d="M1.5 1.5l4.5 4.5 4.5-4.5" fill="none" stroke="#d8c8a0" stroke-width="1.2"/></svg>
<div class="a code" style="left:71.5px;top:455.8px">      <span style="color:#e9c25a">{</span></div>
<div class="a" style="left:0;top:479px;width:45px;text-align:right;font-family:'Liberation Mono',monospace;font-size:11px;line-height:24px;color:#555">21</div>
<div class="a code" style="left:71.5px;top:479.8px">        <span style="color:#9cdcfe">&quot;</span><span style="color:#f07450">iconPath</span><span style="color:#9cdcfe">&quot;</span><span style="color:#b8d8f0">: </span><span style="color:#9cdcfe">&quot;</span><span style="color:#f07450">./images/jigsaw.png</span><span style="color:#9cdcfe">&quot;</span><span style="color:#b8d8f0">,</span></div>
<div class="a" style="left:0;top:503px;width:45px;text-align:right;font-family:'Liberation Mono',monospace;font-size:11px;line-height:24px;color:#555">22</div>
<div class="a code" style="left:71.5px;top:503.8px">        <span style="color:#9cdcfe">&quot;</span><span style="color:#f07450">selectedIconPath</span><span style="color:#9cdcfe">&quot;</span><span style="color:#b8d8f0">: </span><span style="color:#9cdcfe">&quot;</span><span style="color:#f07450">./images/jigsaw2.png</span><span style="color:#9cdcfe">&quot;</span><span style="color:#b8d8f0">,</span></div>
<div class="a" style="left:0;top:527px;width:45px;text-align:right;font-family:'Liberation Mono',monospace;font-size:11px;line-height:24px;color:#555">23</div>
<div class="a code" style="left:71.5px;top:527.8px">        <span style="color:#9cdcfe">&quot;</span><span style="color:#f07450">pagePath</span><span style="color:#9cdcfe">&quot;</span><span style="color:#b8d8f0">: </span><span style="color:#9cdcfe">&quot;</span><span style="color:#f07450">pages/index/index</span><span style="color:#9cdcfe">&quot;</span><span style="color:#b8d8f0">,</span></div>
<div class="a" style="left:0;top:551px;width:45px;text-align:right;font-family:'Liberation Mono',monospace;font-size:11px;line-height:24px;color:#555">24</div>
<div class="a code" style="left:71.5px;top:551.8px">        <span style="color:#9cdcfe">&quot;</span><span style="color:#f07450">text</span><span style="color:#9cdcfe">&quot;</span><span style="color:#b8d8f0">: </span><span style="color:#9cdcfe">&quot;</span><span style="color:#f07450">拼图</span><span style="color:#9cdcfe">&quot;</span></div>
<div class="a" style="left:0;top:575px;width:45px;text-align:right;font-family:'Liberation Mono',monospace;font-size:11px;line-height:24px;color:#555">25</div>
<div class="a code" style="left:71.5px;top:575.8px">      <span style="color:#e9c25a">}</span><span style="color:#b8d8f0">,</span></div>
<div class="a" style="left:0;top:599px;width:45px;text-align:right;font-family:'Liberation Mono',monospace;font-size:11px;line-height:24px;color:#555">26</div>
<svg class="a" style="left:52px;top:604px" width="12" height="8"><path d="M1.5 1.5l4.5 4.5 4.5-4.5" fill="none" stroke="#d8c8a0" stroke-width="1.2"/></svg>
<div class="a code" style="left:71.5px;top:599.8px">      <span style="color:#e9c25a">{</span></div>
<div class="a" style="left:0;top:623px;width:45px;text-align:right;font-family:'Liberation Mono',monospace;font-size:11px;line-height:24px;color:#555">27</div>
<div class="a code" style="left:71.5px;top:623.8px">        <span style="color:#9cdcfe">&quot;</span><span style="color:#f07450">iconPath</span><span style="color:#9cdcfe">&quot;</span><span style="color:#b8d8f0">: </span><span style="color:#9cdcfe">&quot;</span><span style="color:#f07450">./images/setting.png</span><span style="color:#9cdcfe">&quot;</span><span style="color:#b8d8f0">,</span></div>
<div class="a" style="left:0;top:647px;width:45px;text-align:right;font-family:'Liberation Mono',monospace;font-size:11px;line-height:24px;color:#555">28</div>
<div class="a code" style="left:71.5px;top:647.8px">        <span style="color:#9cdcfe">&quot;</span><span style="color:#f07450">selectedIconPath</span><span style="color:#9cdcfe">&quot;</span><span style="color:#b8d8f0">: </span><span style="color:#9cdcfe">&quot;</span><span style="color:#f07450">./images/setting1.png</span><span style="color:#9cdcfe">&quot;</span><span style="color:#b8d8f0">,</span></div>
<div class="a" style="left:0;top:671px;width:45px;text-align:right;font-family:'Liberation Mono',monospace;font-size:11px;line-height:24px;color:#555">29</div>
<div class="a code" style="left:71.5px;top:671.8px">        <span style="color:#9cdcfe">&quot;</span><span style="color:#f07450">pagePath</span><span style="color:#9cdcfe">&quot;</span><span style="color:#b8d8f0">: </span><span style="color:#9cdcfe">&quot;</span><span style="color:#f07450">pages/set/set</span><span style="color:#9cdcfe">&quot;</span><span style="color:#b8d8f0">,</span></div>
<div class="a" style="left:0;top:695px;width:45px;text-align:right;font-family:'Liberation Mono',monospace;font-size:11px;line-height:24px;color:#555">30</div>
<div class="a code" style="left:71.5px;top:695.8px">        <span style="color:#9cdcfe">&quot;</span><span style="color:#f07450">text</span><span style="color:#9cdcfe">&quot;</span><span style="color:#b8d8f0">: </span><span style="color:#9cdcfe">&quot;</span><span style="color:#f07450">设置</span><span style="color:#9cdcfe">&quot;</span></div>
<div class="a" style="left:0;top:719px;width:45px;text-align:right;font-family:'Liberation Mono',monospace;font-size:11px;line-height:24px;color:#555">31</div>
<div class="a code" style="left:71.5px;top:719.8px">      <span style="color:#e9c25a">}</span><span style="color:#b8d8f0">,</span></div>
<div class="a" style="left:0;top:743px;width:45px;text-align:right;font-family:'Liberation Mono',monospace;font-size:11px;line-height:24px;color:#555">32</div>
<svg class="a" style="left:52px;top:748px" width="12" height="8"><path d="M1.5 1.5l4.5 4.5 4.5-4.5" fill="none" stroke="#d8c8a0" stroke-width="1.2"/></svg>
<div class="a code" style="left:71.5px;top:743.8px">      <span style="color:#e9c25a">{</span></div>
<div class="a" style="left:0;top:767px;width:45px;text-align:right;font-family:'Liberation Mono',monospace;font-size:11px;line-height:24px;color:#555">33</div>
<div class="a code" style="left:71.5px;top:767.8px">        <span style="color:#9cdcfe">&quot;</span><span style="color:#f07450">iconPath</span><span style="color:#9cdcfe">&quot;</span><span style="color:#b8d8f0">: </span><span style="color:#9cdcfe">&quot;</span><span style="color:#f07450">./images/question.png</span><span style="color:#9cdcfe">&quot;</span><span style="color:#b8d8f0">,</span></div>
<div class="a" style="left:0;top:791px;width:45px;text-align:right;font-family:'Liberation Mono',monospace;font-size:11px;line-height:24px;color:#555">34</div>
<div class="a code" style="left:71.5px;top:791.8px">        <span style="color:#9cdcfe">&quot;</span><span style="color:#f07450">selectedIconPath</span><span style="color:#9cdcfe">&quot;</span><span style="color:#b8d8f0">: </span><span style="color:#9cdcfe">&quot;</span><span style="color:#f07450">./images/question2.png</span><span style="color:#9cdcfe">&quot;</span><span style="color:#b8d8f0">,</span></div>
<div class="a" style="left:0;top:815px;width:45px;text-align:right;font-family:'Liberation Mono',monospace;font-size:11px;line-height:24px;color:#555">35</div>
<div class="a code" style="left:71.5px;top:815.8px">        <span style="color:#9cdcfe">&quot;</span><span style="color:#f07450">pagePath</span><span style="color:#9cdcfe">&quot;</span><span style="color:#b8d8f0">: </span><span style="color:#9cdcfe">&quot;</span><span style="color:#f07450">pages/help/help</span><span style="color:#9cdcfe">&quot;</span><span style="color:#b8d8f0">,</span></div>
<div class="a" style="left:70.5px;top:-1px;width:8px;height:23px;border:1px solid #888"></div>
</div>
<div class="a" style="left:535px;top:52px;width:15px;height:828px;border-left:1px solid #3a3a3a"></div>
<div class="a" style="left:536px;top:52px;width:14px;height:382px;background:#4f474b"></div>
<div class="a" style="left:540px;top:52px;width:5px;height:11px;background:#9a9a9a"></div>
<div class="a" style="left:540px;top:497px;width:5px;height:10px;background:#9a9a9a"></div>
</div>
<div id="status" class="a">
<div class="a" style="left:8px;top:6px;font-size:12px;line-height:16px;color:#b0b0b0;white-space:nowrap">页面路径</div>
<svg class="a" style="left:60px;top:11px" width="8" height="6"><path d="M1 1.5h6l-3 3.5z" fill="#aaa"/></svg>
<div class="a" style="left:75px;top:8px;width:1px;height:13px;background:#4a4a4a"></div>
<div class="a" style="left:83px;top:6px;font-size:12px;line-height:16px;color:#b4b8c8;white-space:nowrap">pages/index/index</div>
<svg class="a" style="left:186px;top:7px" width="16" height="16"><path d="M4.5 4.5h9v9h-9z" fill="none" stroke="#aaa" stroke-width="1.1"/><path d="M2.5 11.5v-9h9" fill="none" stroke="#aaa" stroke-width="1.1"/></svg>
<svg class="a" style="left:440px;top:6px" width="60" height="16"><path d="M3 8q8-7 16 0q-8 7-16 0z" fill="none" stroke="#aaa" stroke-width="1.1"/><circle cx="11" cy="8" r="2.4" fill="none" stroke="#aaa" stroke-width="1.1"/><circle cx="40" cy="8" r="1" fill="#aaa"/><circle cx="44" cy="8" r="1" fill="#aaa"/><circle cx="48" cy="8" r="1" fill="#aaa"/></svg>
<svg class="a" style="left:515px;top:6px" width="60" height="16"><circle cx="8" cy="8" r="6.2" fill="none" stroke="#aaa" stroke-width="1"/><path d="M5.3 5.3l5.4 5.4M10.7 5.3l-5.4 5.4" stroke="#aaa" stroke-width="1"/><path d="M35 2.5l6 11h-12z" fill="none" stroke="#aaa" stroke-width="1"/><path d="M35 6.5v4M35 11.5v1" stroke="#aaa" stroke-width="1"/></svg>
<div class="a" style="left:532px;top:6px;font-size:12px;line-height:16px;color:#aaa">0</div>
<div class="a" style="left:559px;top:6px;font-size:12px;line-height:16px;color:#aaa">0</div>
<div class="a" style="left:999px;top:6px;font-size:12px;line-height:16px;color:#aaa;white-space:nowrap">行 1，列 1</div>
<div class="a" style="left:1071px;top:6px;font-size:12px;line-height:16px;color:#aaa;white-space:nowrap">空格: 2</div>
<div class="a" style="left:1123px;top:6px;font-size:12px;line-height:16px;color:#aaa;white-space:nowrap">UTF-8</div>
<div class="a" style="left:1170px;top:6px;font-size:12px;line-height:16px;color:#aaa;white-space:nowrap">CRLF</div>
<div class="a" style="left:1213px;top:6px;font-size:12px;line-height:16px;color:#aaa;white-space:nowrap">JSON</div>
</div>
<div class="a" style="left:497px;top:145px;width:3px;height:826px;background:#3e3e3e"></div>
<div class="a" style="left:500px;top:92px;width:1px;height:908px;background:#1f1f1f"></div>
</body></html>
